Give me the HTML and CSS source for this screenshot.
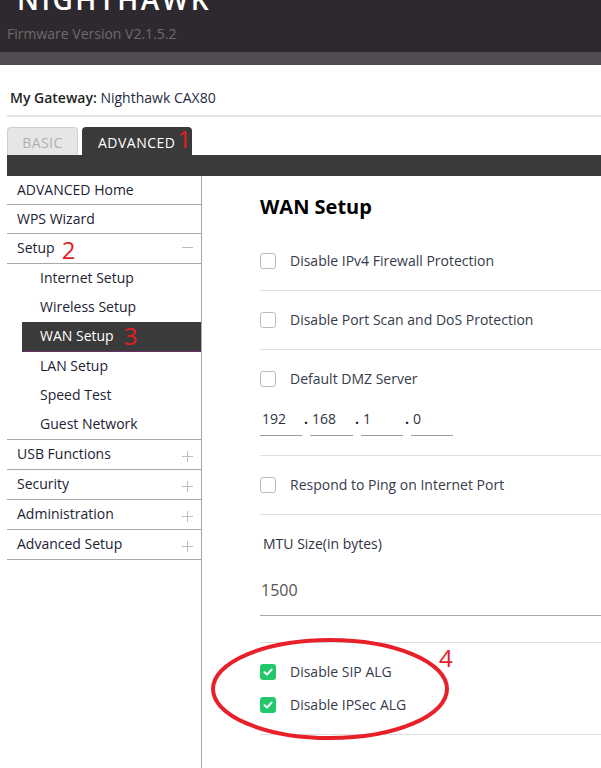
FILE: index.html
```html
<!DOCTYPE html>
<html lang="en">
<head>
<meta charset="utf-8">
<title>NIGHTHAWK - WAN Setup</title>
<link rel="stylesheet" href="styles.css">
</head>
<body>
<header class="top">
  <div class="brand">NIGHTHAWK</div>
  <div class="fw">Firmware Version V2.1.5.2</div>
</header>
<div class="band"></div>
<div class="page">
  <div class="gateway"><span class="gw-label">My Gateway:</span> Nighthawk CAX80</div>
  <div class="tabs">
    <div class="tab tab-basic">BASIC</div>
    <div class="tab tab-adv">ADVANCED<span class="mark mark-1">1</span></div>
  </div>
  <div class="tabbar"></div>
  <div class="layout">
    <nav class="side">
      <div class="nav-item nav-tight">ADVANCED Home</div>
      <div class="nav-item nav-tight">WPS Wizard</div>
      <div class="nav-item"><span>Setup<span class="mark mark-2">2</span></span>
        <svg class="pm" width="11" height="11" viewBox="0 0 11 11"><path d="M0 5.5H11" stroke="#bdbdbd" stroke-width="1"/></svg>
      </div>
      <div class="subs">
        <div class="sub">Internet Setup</div>
        <div class="sub">Wireless Setup</div>
        <div class="sub sub-active">WAN Setup<span class="mark mark-3">3</span></div>
        <div class="sub">LAN Setup</div>
        <div class="sub">Speed Test</div>
        <div class="sub">Guest Network</div>
      </div>
      <div class="nav-item"><span>USB Functions</span>
        <svg class="pm pm-plus" width="11" height="11" viewBox="0 0 11 11"><path d="M0 5.5H11M5.5 0V11" stroke="#bdbdbd" stroke-width="1"/></svg>
      </div>
      <div class="nav-item"><span>Security</span>
        <svg class="pm pm-plus" width="11" height="11" viewBox="0 0 11 11"><path d="M0 5.5H11M5.5 0V11" stroke="#bdbdbd" stroke-width="1"/></svg>
      </div>
      <div class="nav-item"><span>Administration</span>
        <svg class="pm pm-plus" width="11" height="11" viewBox="0 0 11 11"><path d="M0 5.5H11M5.5 0V11" stroke="#bdbdbd" stroke-width="1"/></svg>
      </div>
      <div class="nav-item"><span>Advanced Setup</span>
        <svg class="pm pm-plus" width="11" height="11" viewBox="0 0 11 11"><path d="M0 5.5H11M5.5 0V11" stroke="#bdbdbd" stroke-width="1"/></svg>
      </div>
    </nav>
    <main class="content">
      <h1 class="title">WAN Setup</h1>
      <div class="row">
        <div class="check"><span class="box"></span><span class="lbl">Disable IPv4 Firewall Protection</span></div>
      </div>
      <div class="row">
        <div class="check"><span class="box"></span><span class="lbl">Disable Port Scan and DoS Protection</span></div>
      </div>
      <div class="row row-dmz">
        <div class="check"><span class="box"></span><span class="lbl">Default DMZ Server</span></div>
        <div class="ip">
          <div class="ip-box ip-w42">192</div><span class="ip-dot">.</span>
          <div class="ip-box ip-w43">168</div><span class="ip-dot">.</span>
          <div class="ip-box ip-w42">1</div><span class="ip-dot">.</span>
          <div class="ip-box ip-w42">0</div>
        </div>
      </div>
      <div class="row">
        <div class="check"><span class="box"></span><span class="lbl">Respond to Ping on Internet Port</span></div>
      </div>
      <div class="row row-mtu">
        <div class="mtu-label">MTU Size(in bytes)</div>
        <div class="mtu-field">1500</div>
      </div>
      <div class="row row-alg">
        <div class="check"><span class="box box-on"><svg width="16" height="16" viewBox="0 0 16 16"><path d="M4.5 8.3L7 10.6L11.6 5.6" fill="none" stroke="#fff" stroke-width="2" stroke-linecap="round" stroke-linejoin="round"/></svg></span><span class="lbl">Disable SIP ALG</span></div>
        <div class="check"><span class="box box-on"><svg width="16" height="16" viewBox="0 0 16 16"><path d="M4.5 8.3L7 10.6L11.6 5.6" fill="none" stroke="#fff" stroke-width="2" stroke-linecap="round" stroke-linejoin="round"/></svg></span><span class="lbl">Disable IPSec ALG</span></div>
      </div>
    </main>
  </div>
</div>
<svg class="ring" width="242" height="106" viewBox="0 0 242 106"><ellipse cx="121" cy="53" rx="117" ry="49" fill="none" stroke="#e8202a" stroke-width="4"/></svg>
<span class="mark mark-4">4</span>
</body>
</html>
```
FILE: styles.css
```css
* { box-sizing: border-box; margin: 0; padding: 0; }
html, body { height: 100%; }
body {
  font-family: "Open Sans", "DejaVu Sans", sans-serif;
  font-size: 14px;
  color: #262b38;
  background: #fff;
  overflow: hidden;
  position: relative;
}

/* header */
.top { background: #2e292e; height: 52px; overflow: hidden; }
.brand {
  color: #fff; font-size: 28px; font-weight: 600; letter-spacing: 2.5px;
  line-height: 28px; margin-top: -15px; padding-left: 17px;
}
.fw { color: #6f696f; font-size: 14px; line-height: 20px; margin-top: 11px; padding-left: 7px; }
.band { background: #524c52; height: 13px; }

.page { padding-left: 7px; }
.gateway {
  padding: 23px 0 7px 3px; line-height: 20px; color: #232a40;
  border-bottom: 2px solid #e6e6e6;
}
.gw-label { font-weight: 600; color: #1f1f24; }

/* tabs */
.tabs { display: flex; gap: 4px; margin-top: 10px; height: 28px; }
.tab {
  height: 28px; padding-top: 3px; line-height: 25px; border-radius: 4px 4px 0 0;
  white-space: nowrap;
}
.tab-basic {
  width: 71px; text-align: center; background: #e6e6e6; color: #b0b0b0;
  border: 1px solid #cfcfcf; border-bottom: none; padding-top: 2px; letter-spacing: 0.4px;
}
.tab-adv { width: 110px; background: #3a3a3a; color: #fff; padding-left: 16px; letter-spacing: 0.5px; }
.tabbar { background: #3a3a3a; height: 21px; }

.mark { color: #e31e24; font-size: 24px; line-height: 0; font-family: "Open Sans", sans-serif; letter-spacing: 0; }
.mark-1 { margin-left: 2px; }
.mark-2 { margin-left: 7px; vertical-align: -6px; }
.mark-3 { margin-left: 10px; vertical-align: -4px; }
.mark-4 { position: absolute; left: 439px; top: 646px; line-height: 24px; }

/* layout */
.layout { display: flex; min-height: 600px; }
.side { width: 195px; flex: none; border-right: 1px solid #a9a9a9; }
.nav-item {
  height: 30px; display: flex; align-items: center; justify-content: space-between;
  padding: 0 8px 3px 10px; border-bottom: 1px solid #a9a9a9; color: #1d2233;
  white-space: nowrap;
}
.nav-tight { height: 29px; padding-bottom: 2px; }
.pm { flex: none; }
.pm-plus { margin-top: 6px; }
.subs { border-bottom: 1px solid #a9a9a9; }
.sub { height: 29px; line-height: 28px; padding-left: 33px; color: #1d2233; white-space: nowrap; }
.sub-active {
  height: 30px; margin-left: 15px; padding-left: 18px; background: #3a3a3a; color: #fff;
  border-bottom: 1px solid #6a2f66; line-height: 28px;
}

/* content */
.content { flex: 1; padding-left: 58px; }
.title { font-size: 20px; font-weight: 700; line-height: 24px; margin-top: 19px; margin-bottom: 13px; color: #000; }
.row { padding: 21px 0; border-bottom: 1px solid #dce0e4; }
.check { display: flex; align-items: center; gap: 14px; height: 16px; }
.box { width: 16px; height: 16px; border: 1px solid #bdbdbd; border-radius: 3px; background: #fff; flex: none; }
.box-on { background: #22c86a; border: none; }
.box-on svg { display: block; }
.lbl { line-height: 16px; color: #363b4a; white-space: nowrap; }

.row-dmz { padding-bottom: 19px; }
.ip { display: flex; margin-top: 22px; align-items: flex-start; }
.ip-box {
  height: 27px; line-height: 20px; padding-left: 2px; border-bottom: 1px solid #9c9c9c;
  color: #2e3340;
}
.ip-w42 { width: 42px; }
.ip-w43 { width: 43px; }
.ip-dot { width: 8px; text-align: center; font-weight: 700; line-height: 20px; color: #222; }

.row-mtu { padding-bottom: 26px; }
.mtu-label { padding-left: 3px; line-height: 16px; color: #2f3443; }
.mtu-field {
  margin-top: 28px; line-height: 20px; font-size: 16px; color: #555;
  padding: 0 0 15px 1px; border-bottom: 1px solid #a9a9a9;
}
.row-alg { display: flex; flex-direction: column; gap: 17px; }

.ring { position: absolute; left: 209px; top: 636px; }
```
